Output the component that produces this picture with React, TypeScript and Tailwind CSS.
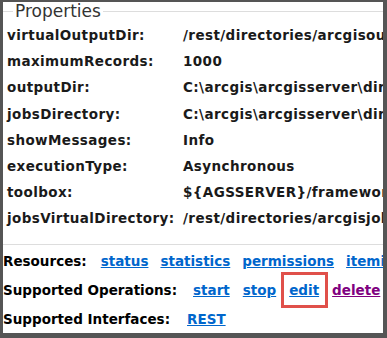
import React from "react";

const rows: [string, string][] = [
  ["virtualOutputDir:", "/rest/directories/arcgisoutput"],
  ["maximumRecords:", "1000"],
  ["outputDir:", "C:\\arcgis\\arcgisserver\\directories\\arcgisoutput"],
  ["jobsDirectory:", "C:\\arcgis\\arcgisserver\\directories\\arcgisjobs"],
  ["showMessages:", "Info"],
  ["executionType:", "Asynchronous"],
  ["toolbox:", "${AGSSERVER}/framework/runtime"],
  ["jobsVirtualDirectory:", "/rest/directories/arcgisjobs"],
];

const link = "text-[#0066cc] underline font-bold";

export default function App() {
  return (
    <div
      className="w-[387px] h-[338px] bg-[#555555] pt-[2px] pl-[3px] pr-[4px] pb-[5px] overflow-hidden"
      style={{ fontFamily: '"DejaVu Sans", Verdana, sans-serif' }}
    >
      <div className="w-full h-full bg-white overflow-hidden">
        <fieldset className="border border-[#dddddd] -mx-[4px] px-0 pt-[1px] pb-[12px] min-w-0">
          <legend className="ml-[13px] px-[2px] text-[17px] leading-[19px] text-[#333333]">
            Properties
          </legend>
          <div className="flex flex-col">
            {rows.map(([k, v]) => (
              <div key={k} className="flex h-[26.2px] items-center text-[13.5px] font-bold text-[#1a1a1a] whitespace-nowrap tracking-[0.4px]">
                <div className="w-[183px] shrink-0 pl-[7px]">{k}</div>
                <div>{v}</div>
              </div>
            ))}
          </div>
        </fieldset>
        <div className="pt-[2px] text-[13.5px] font-bold text-black whitespace-nowrap">
          <div className="flex items-center h-[29px]">
            <span>Resources:</span>
            <span className="ml-[14px] flex gap-[12px]">
              <a className={link}>status</a>
              <a className={link}>statistics</a>
              <a className={link}>permissions</a>
              <a className={link}>iteminfo</a>
            </span>
          </div>
          <div className="flex items-center h-[29px]">
            <span>Supported Operations:</span>
            <span className="ml-[16px] flex gap-[13px] items-center">
              <a className={link}>start</a>
              <a className={link}>stop</a>
              <span className="relative">
                <a className={link}>edit</a>
                <span className="absolute -left-[8px] -right-[9px] -top-[8px] -bottom-[8px] border-[3px] border-[#e0504a]" />
              </span>
              <a className="text-[#800080] underline font-bold">delete</a>
            </span>
          </div>
          <div className="flex items-center h-[29px]">
            <span>Supported Interfaces:</span>
            <span className="ml-[17px]">
              <a className={link}>REST</a>
            </span>
          </div>
        </div>
      </div>
    </div>
  );
}
